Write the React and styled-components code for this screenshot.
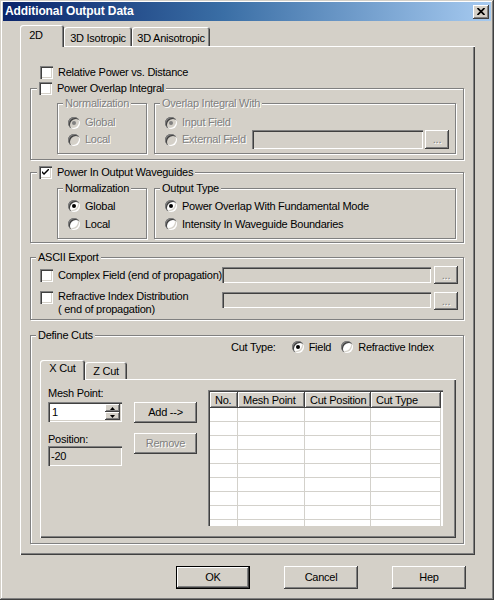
import styled, { createGlobalStyle, css } from 'styled-components'

const FACE = '#d4d0c8'
const SHADOW = '#808080'
const DARK = '#404040'
const LIGHT = '#ffffff'

const raised = css`
  box-shadow: inset -1px -1px ${DARK}, inset 1px 1px ${LIGHT}, inset -2px -2px ${SHADOW}, inset 2px 2px ${FACE};
`
const sunken = css`
  box-shadow: inset 1px 1px ${SHADOW}, inset 2px 2px ${DARK}, inset -1px -1px ${LIGHT}, inset -2px -2px ${FACE};
`

const GlobalStyle = createGlobalStyle`
  body {
    margin: 0;
    background: #fff;
  }
  * {
    box-sizing: border-box;
  }
`

const Window = styled.div`
  width: 494px;
  height: 600px;
  padding: 2px 3px 3px;
  display: flex;
  flex-direction: column;
  background: ${FACE};
  font-family: 'Liberation Sans', Arial, sans-serif;
  font-size: 11px;
  line-height: 13px;
  letter-spacing: -0.25px;
  color: #000;
  box-shadow: inset -1px -1px ${DARK}, inset 1px 1px ${FACE}, inset -2px -2px ${SHADOW}, inset 2px 2px ${LIGHT};
`

const TitleBar = styled.div`
  height: 19px;
  padding: 0 2px 0 2px;
  display: flex;
  align-items: center;
  justify-content: space-between;
  background: linear-gradient(to right, #0a246a, #3a6ea5 45%, #a6caf0);
  color: #fff;
  font-weight: bold;
  font-size: 12px;
  letter-spacing: -0.1px;
`

const CloseButton = styled.div`
  width: 16px;
  height: 14px;
  display: flex;
  align-items: center;
  justify-content: center;
  background: ${FACE};
  ${raised}
`

const Body = styled.div`
  margin-top: 4px;
  padding-left: 17px;
`

const TabStrip = styled.div`
  height: ${(p) => p.$h}px;
  margin-top: ${(p) => p.$mt || 0}px;
  display: flex;
  align-items: flex-end;
`

const Tab = styled.div`
  position: relative;
  z-index: ${(p) => (p.$active ? 2 : 1)};
  width: ${(p) => p.$w}px;
  height: ${(p) => (p.$active ? p.$h + 1 : p.$h - 2)}px;
  margin-bottom: ${(p) => (p.$active ? -1 : 0)}px;
  padding-top: ${(p) => p.$pt}px;
  padding-right: ${(p) => p.$pr || 0}px;
  text-align: center;
  background: ${FACE};
  border-radius: 3px 3px 0 0;
  box-shadow: inset 1px 1px ${LIGHT}, inset -1px 0 ${DARK}, inset -2px 0 ${SHADOW};
`

const TabPanel = styled.div`
  width: 455px;
  height: 509px;
  padding: 20px 11px 0 10px;
  display: flex;
  flex-direction: column;
  box-shadow: inset 1px 1px ${LIGHT}, inset -1px -1px ${DARK}, inset -2px -2px ${SHADOW};
`

const Group = styled.div`
  position: relative;
  margin-top: ${(p) => p.$mt || 0}px;
  padding: ${(p) => p.$pad};
  width: ${(p) => (p.$w ? `${p.$w}px` : 'auto')};
  flex: ${(p) => (p.$grow ? 1 : 'none')};
  border: 1px solid ${SHADOW};
  box-shadow: inset 1px 1px ${LIGHT}, 1px 1px ${LIGHT};
`

const Legend = styled.div`
  position: absolute;
  top: -7px;
  left: ${(p) => p.$left || 5}px;
  padding: 0 2px;
  display: flex;
  align-items: center;
  gap: 5px;
  height: 13px;
  background: ${FACE};
  white-space: nowrap;
`

const GroupRow = styled.div`
  display: flex;
  gap: 7px;
`

const OptionRow = styled.label`
  display: flex;
  align-items: ${(p) => p.$align || 'center'};
  gap: 5px;
  height: ${(p) => p.$h || 13}px;
  margin-left: ${(p) => p.$ml || 0}px;
  margin-top: ${(p) => p.$mt || 0}px;
`

const Text = styled.span`
  white-space: nowrap;
  color: ${(p) => (p.$disabled ? SHADOW : '#000')};
  text-shadow: ${(p) => (p.$disabled ? `1px 1px 0 ${LIGHT}` : 'none')};
  width: ${(p) => (p.$w ? `${p.$w}px` : 'auto')};
  margin-top: ${(p) => p.$mt || 0}px;
  flex: none;
`

const CheckBox = styled.span`
  flex: none;
  width: 13px;
  height: 13px;
  margin-top: ${(p) => p.$mt || 0}px;
  display: flex;
  align-items: center;
  justify-content: center;
  background: ${(p) => (p.$disabled ? FACE : LIGHT)};
  ${sunken}
`

const RadioDot = styled.span`
  flex: none;
  width: 12px;
  height: 12px;
  border-radius: 50%;
  display: flex;
  align-items: center;
  justify-content: center;
  background: ${(p) => (p.$disabled ? FACE : LIGHT)};
  box-shadow: inset 1px 1px ${SHADOW}, inset 2px 2px ${DARK}, inset -1px -1px ${LIGHT}, inset -2px -2px ${FACE};
  &::after {
    content: '';
    display: ${(p) => (p.$checked ? 'block' : 'none')};
    width: 4px;
    height: 4px;
    border-radius: 50%;
    background: ${(p) => (p.$disabled ? SHADOW : '#000')};
  }
`

const Field = styled.div`
  flex: ${(p) => (p.$grow ? 1 : 'none')};
  width: ${(p) => (p.$w ? `${p.$w}px` : 'auto')};
  height: ${(p) => p.$h || 20}px;
  margin-left: ${(p) => p.$ml || 0}px;
  margin-top: ${(p) => p.$mt || 0}px;
  padding: 0 3px;
  display: flex;
  align-items: center;
  background: ${(p) => (p.$white ? LIGHT : FACE)};
  ${sunken}
`

const Button = styled.button`
  flex: none;
  font: inherit;
  letter-spacing: inherit;
  color: ${(p) => (p.disabled ? SHADOW : '#000')};
  text-shadow: ${(p) => (p.disabled ? `1px 1px 0 ${LIGHT}` : 'none')};
  width: ${(p) => p.$w}px;
  height: ${(p) => p.$h}px;
  margin-left: ${(p) => p.$ml || 0}px;
  margin-top: ${(p) => p.$mt || 0}px;
  padding: 0;
  background: ${FACE};
  border: ${(p) => (p.$default ? '1px solid #000' : 'none')};
  ${raised}
`

const SubGroupRows = styled.div`
  display: flex;
  flex-direction: column;
`

const CutTypeRow = styled.div`
  display: flex;
  align-items: center;
  height: 14px;
  margin-left: 191px;
`

const CutLabel = styled.span`
  margin-right: 16px;
`

const InnerPanel = styled.div`
  height: 159px;
  padding: 8px 9px 0 8px;
  display: flex;
  align-items: flex-start;
  box-shadow: inset 1px 1px ${LIGHT}, inset -1px -1px ${DARK}, inset -2px -2px ${SHADOW};
`

const Column = styled.div`
  display: flex;
  flex-direction: column;
  width: ${(p) => p.$w}px;
  margin-left: ${(p) => p.$ml || 0}px;
  padding-top: ${(p) => p.$pt || 0}px;
  gap: ${(p) => p.$gap || 0}px;
`

const SpinBox = styled.div`
  width: 74px;
  height: 20px;
  margin-top: 2px;
  padding: 2px;
  display: flex;
  background: ${LIGHT};
  ${sunken}
`

const SpinValue = styled.span`
  flex: 1;
  padding-left: 2px;
  line-height: 16px;
`

const SpinButtons = styled.div`
  width: 15px;
  display: flex;
  flex-direction: column;
`

const SpinButton = styled.div`
  flex: 1;
  display: flex;
  align-items: center;
  justify-content: center;
  background: ${FACE};
  ${raised}
`

const ListView = styled.div`
  width: 235px;
  height: 136px;
  margin: 3px 0 0 11px;
  padding: 2px 0 0 2px;
  overflow: hidden;
  background: ${LIGHT};
  box-shadow: inset 1px 1px ${SHADOW}, inset 2px 2px ${DARK};
`

const GridRow = styled.div`
  display: grid;
  grid-template-columns: 28px 67px 66px 70px;
`

const HeadCell = styled.div`
  height: 16px;
  padding-left: 5px;
  line-height: 16px;
  white-space: nowrap;
  overflow: hidden;
  background: ${FACE};
  box-shadow: inset -1px -1px ${DARK}, inset 1px 1px ${LIGHT}, inset -2px -2px ${SHADOW};
`

const BodyCell = styled.div`
  height: 14px;
  border-right: 1px solid #d3d1cb;
  border-bottom: 1px solid #d3d1cb;
`

const ButtonBar = styled.div`
  margin-top: 11px;
  padding-right: 25px;
  display: flex;
  justify-content: flex-end;
  gap: 34px;
`

const Check = ({ checked, disabled, mt }) => (
  <CheckBox $disabled={disabled} $mt={mt}>
    {checked && (
      <svg width="7" height="7" viewBox="0 0 7 7">
        <path d="M0 2 L0 4 L2 6 L7 1 L7 -1 L2 4 Z" fill="#000" />
      </svg>
    )}
  </CheckBox>
)

const Radio = ({ label, checked, disabled, h }) => (
  <OptionRow $h={h}>
    <RadioDot $checked={checked} $disabled={disabled} />
    <Text $disabled={disabled}>{label}</Text>
  </OptionRow>
)

const Arrow = ({ up }) => (
  <svg width="5" height="3" viewBox="0 0 5 3">
    <path d={up ? 'M2.5 0 L5 3 L0 3 Z' : 'M0 0 L5 0 L2.5 3 Z'} fill="#000" />
  </svg>
)

const ROWS = Array.from({ length: 9 }, (_, i) => i)

const App = () => (
  <>
    <GlobalStyle />
    <Window>
      <TitleBar>
        <span>Additional Output Data</span>
        <CloseButton>
          <svg width="8" height="7" viewBox="0 0 8 7">
            <path d="M0.5 0 L7.5 7 M7.5 0 L0.5 7" stroke="#000" strokeWidth="1.7" />
          </svg>
        </CloseButton>
      </TitleBar>

      <Body>
        <TabStrip $h={21}>
          <Tab $active $w={44} $h={21} $pt={4} $pr={12}>2D</Tab>
          <Tab $w={68} $h={21} $pt={5}>3D Isotropic</Tab>
          <Tab $w={78} $h={21} $pt={5}>3D Anisotropic</Tab>
        </TabStrip>

        <TabPanel>
          <OptionRow $ml={10}>
            <Check />
            <Text>Relative Power vs. Distance</Text>
          </OptionRow>

          <Group $mt={9} $pad="14px 7px 5px 26px">
            <Legend $left={6}>
              <Check />
              <Text>Power Overlap Integral</Text>
            </Legend>
            <GroupRow>
              <Group $w={90} $pad="10px 6px 5px 10px">
                <Legend><Text $disabled>Normalization</Text></Legend>
                <SubGroupRows>
                  <Radio label="Global" checked disabled h={17} />
                  <Radio label="Local" disabled h={17} />
                </SubGroupRows>
              </Group>
              <Group $grow $pad="10px 6px 5px 10px">
                <Legend><Text $disabled>Overlap Integral With</Text></Legend>
                <SubGroupRows>
                  <Radio label="Input Field" checked disabled h={17} />
                  <OptionRow $h={17}>
                    <RadioDot $disabled />
                    <Text $disabled>External Field</Text>
                    <Field $grow $h={19} $ml={1} />
                    <Button $w={24} $h={19} $ml={-3} disabled>...</Button>
                  </OptionRow>
                </SubGroupRows>
              </Group>
            </GroupRow>
          </Group>

          <Group $mt={12} $pad="15px 7px 3px 26px">
            <Legend $left={6}>
              <Check checked />
              <Text>Power In Output Waveguides</Text>
            </Legend>
            <GroupRow>
              <Group $w={90} $pad="8px 6px 5px 10px">
                <Legend><Text>Normalization</Text></Legend>
                <SubGroupRows>
                  <Radio label="Global" checked h={18} />
                  <Radio label="Local" h={18} />
                </SubGroupRows>
              </Group>
              <Group $grow $pad="8px 6px 5px 10px">
                <Legend><Text>Output Type</Text></Legend>
                <SubGroupRows>
                  <Radio label="Power Overlap With Fundamental Mode" checked h={18} />
                  <Radio label="Intensity In Waveguide Boundaries" h={18} />
                </SubGroupRows>
              </Group>
            </GroupRow>
          </Group>

          <Group $mt={14} $pad="8px 5px 3px 9px">
            <Legend><Text>ASCII Export</Text></Legend>
            <OptionRow $h={18}>
              <Check />
              <Text $w={164}>Complex Field (end of propagation)</Text>
              <Field $w={209} $h={16} $ml={-5} />
              <Button $w={24} $h={18} $ml={-2} disabled>...</Button>
            </OptionRow>
            <OptionRow $h={26} $mt={6} $align="flex-start">
              <Check mt={1} />
              <Text $w={164}>
                Refractive Index Distribution
                <br />( end of propagation)
              </Text>
              <Field $w={209} $h={16} $ml={-5} $mt={2} />
              <Button $w={24} $h={18} $ml={-2} $mt={2} disabled>...</Button>
            </OptionRow>
          </Group>

          <Group $mt={15} $pad="4px 7px 5px 9px">
            <Legend><Text>Define Cuts</Text></Legend>
            <CutTypeRow>
              <CutLabel>Cut Type:</CutLabel>
              <OptionRow>
                <RadioDot $checked />
                <Text>Field</Text>
              </OptionRow>
              <OptionRow $ml={10}>
                <RadioDot />
                <Text>Refractive Index</Text>
              </OptionRow>
            </CutTypeRow>

            <TabStrip $h={19} $mt={6}>
              <Tab $active $w={45} $h={19} $pt={2}>X Cut</Tab>
              <Tab $w={42} $h={19} $pt={3}>Z Cut</Tab>
            </TabStrip>
            <InnerPanel>
              <Column $w={74}>
                <Text>Mesh Point:</Text>
                <SpinBox>
                  <SpinValue>1</SpinValue>
                  <SpinButtons>
                    <SpinButton><Arrow up /></SpinButton>
                    <SpinButton><Arrow /></SpinButton>
                  </SpinButtons>
                </SpinBox>
                <Text $mt={11}>Position:</Text>
                <Field $w={74} $h={20}>-20</Field>
              </Column>
              <Column $w={63} $ml={12} $pt={15} $gap={10}>
                <Button $w={63} $h={21}>Add --&gt;</Button>
                <Button $w={63} $h={21} disabled>Remove</Button>
              </Column>
              <ListView>
                <GridRow>
                  <HeadCell>No.</HeadCell>
                  <HeadCell>Mesh Point</HeadCell>
                  <HeadCell>Cut Position</HeadCell>
                  <HeadCell>Cut Type</HeadCell>
                </GridRow>
                {ROWS.map((r) => (
                  <GridRow key={r}>
                    <BodyCell />
                    <BodyCell />
                    <BodyCell />
                    <BodyCell />
                  </GridRow>
                ))}
              </ListView>
            </InnerPanel>
          </Group>
        </TabPanel>
      </Body>

      <ButtonBar>
        <Button $w={74} $h={23} $default>OK</Button>
        <Button $w={74} $h={23}>Cancel</Button>
        <Button $w={74} $h={23}>Hep</Button>
      </ButtonBar>
    </Window>
  </>
)

export default App
